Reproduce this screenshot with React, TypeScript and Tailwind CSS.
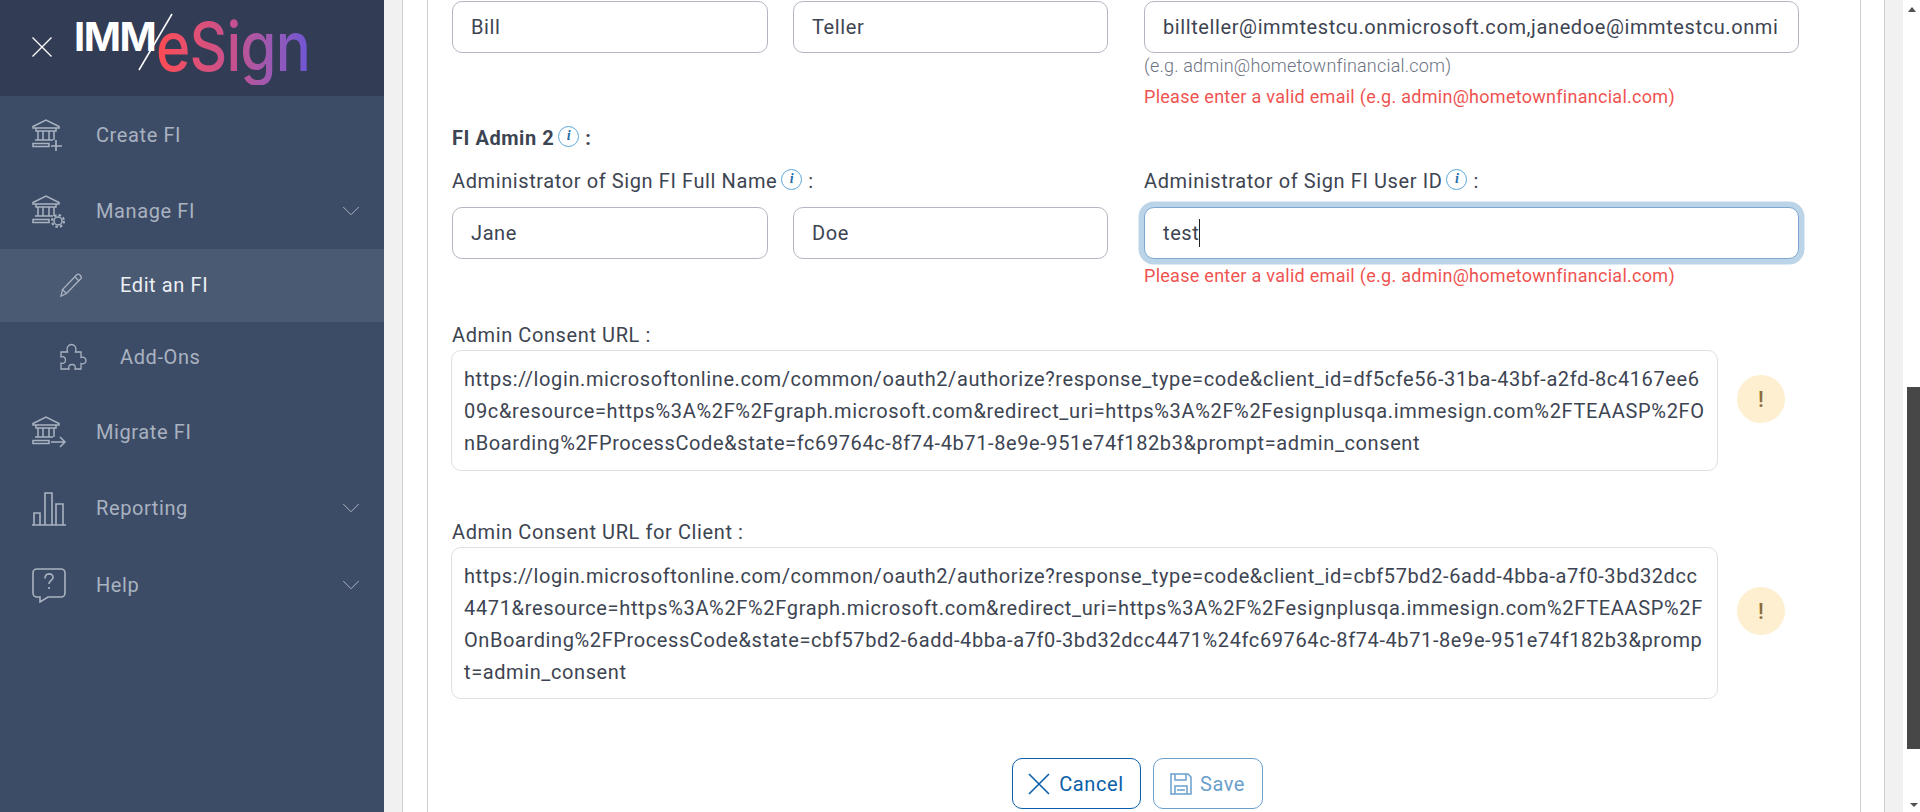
import React from "react";
import { ChevronDown } from "lucide-react";

const stroke = "#a9b2c0";

function Bank({ children }: { children?: React.ReactNode }) {
  return (
    <svg width="36" height="36" viewBox="0 0 36 36" fill="none" stroke={stroke} strokeWidth="1.5" className="shrink-0">
      <path d="M2 9.5 15 3l13 6.500v1.500H2z" />
      <path d="M5 11v3h20v-3M7 14v9M12 14v9M18 14v9M23 14v9" />
      <path d="M4 23h18M2 26.500h16v3H2z" />
      {children}
    </svg>
  );
}

const icons: Record<string, React.ReactNode> = {
  create: <Bank><path d="M25 23v11M20 29h11" strokeWidth="1.700" /></Bank>,
  manage: (
    <Bank>
      <circle cx="27" cy="28" r="4" />
      <circle cx="27" cy="28" r="6" strokeDasharray="2.500 2.200" strokeWidth="2" />
    </Bank>
  ),
  migrate: <Bank><path d="M20 28h14M29 23l5 5-5 5" /></Bank>,
  reporting: (
    <svg width="36" height="36" viewBox="0 0 36 36" fill="none" stroke={stroke} strokeWidth="1.600" className="shrink-0">
      <path d="M1 35h34M3 35V23h6v12M14 35V3h7v32M25 35V14h7v21" />
    </svg>
  ),
  help: (
    <svg width="36" height="36" viewBox="0 0 36 36" fill="none" stroke={stroke} strokeWidth="1.600" className="shrink-0">
      <path d="M6 2h24a4 4 0 0 1 4 4v20a4 4 0 0 1-4 4H17l-8 5v-5H6a4 4 0 0 1-4-4V6a4 4 0 0 1 4-4z" />
      <path d="M14 11.500c0-6 8-6 8-1 0 3-4 3-4 6.500M18 20v2" />
    </svg>
  ),
  pencil: (
    <svg width="26" height="26" viewBox="0 0 26 26" fill="none" stroke={stroke} strokeWidth="1.300" className="shrink-0">
      <path d="M2 24l1.500-6.500L18 2.500c1.500-1.500 5.500 2 4 4L7.500 21.500z" />
      <path d="M3.500 17.500l4 4M16 5l4 4" />
    </svg>
  ),
  puzzle: (
    <svg width="28" height="28" viewBox="0 0 28 28" fill="none" stroke={stroke} strokeWidth="1.300" className="shrink-0">
      <path d="M2 9h6.500C7 5 9 1.500 12.500 1.500S18 5 16.500 9H22v5.500c3-1 5 .5 5 3s-2 4-5 3V26h-6c1-3-.5-4.500-3-4.500s-4 1.500-3 4.500H2v-6c3 1 4.500-.5 4.500-3s-1.500-4-4.500-3z" />
    </svg>
  ),
};

function NavRow({ label, icon, chevron, y, sub, active }: { label: string; icon: string; chevron?: boolean; y: string; sub?: boolean; active?: boolean }) {
  return (
    <div className={`flex items-center ${y} ${sub ? "pl-[59px] pb-[2px]" : "pl-[31px]"} ${active ? "bg-[#4a5a72] text-[#eceff3]" : "text-[#a9b2c0]"}`}>
      <div className={`${sub ? "w-[61px]" : "w-[65px]"} flex shrink-0`}>{icons[icon]}</div>
      <span className="text-[20px] leading-6 tracking-[0.6px] flex-1">{label}</span>
      {chevron && <ChevronDown size={30} strokeWidth={0.8} color={stroke} className="mr-[18px]" />}
    </div>
  );
}

function Logo() {
  return (
    <div className="relative w-[240px] h-[80px]">
      <span className="absolute -left-[3px] top-[9px] text-[40px] leading-[40px] font-bold text-white tracking-[-1.500px]" style={{ fontFamily: "Inter, sans-serif" }}>IMM</span>
      <span
        className="absolute left-[79px] -top-[1px] origin-left scale-x-[0.86] text-[68px] leading-[78px] font-medium tracking-[-1px] bg-clip-text text-transparent bg-gradient-to-r from-[#ff4a50] via-[#c5508e] to-[#6d55d6]"
        style={{ fontFamily: "Inter, sans-serif" }}
      >
        eSign
      </span>
      <svg width="240" height="80" viewBox="0 0 240 80" className="absolute left-0 top-0" fill="none" stroke="#fff" strokeWidth="1.500">
        <path d="M95 6 62 62" />
      </svg>
    </div>
  );
}

function Info({ right = 6 }: { right?: number }) {
  return (
    <span
      className="inline-flex items-center justify-center rounded-full border border-[#5aa5d8] text-[#1f6fa8] italic font-bold bg-white ml-[4px] -translate-y-[2px] shrink-0 w-[21px] h-[21px] text-[14px] tracking-normal"
      style={{ marginRight: right, fontFamily: "'Liberation Serif', serif" }}
    >
      i
    </span>
  );
}

function Field({ value, focus, caret }: { value: string; focus?: boolean; caret?: boolean }) {
  return (
    <div
      className={`h-[52px] w-full rounded-[10px] border bg-white flex items-center pl-[18px] pr-[20px] text-[20px] tracking-[0.6px] text-[#3d4452] whitespace-nowrap ${
        focus ? "border-[#7ea8d1] shadow-[0_0_0_5.500px_#bcd4e8]" : "border-[#b3b7c1]"
      }`}
    >
      <span className="overflow-hidden">{value}</span>
      {caret && <span className="w-px h-[28px] bg-[#222] shrink-0" />}
    </div>
  );
}

function UrlBlock({ label, lines, h, mt, mb, alertTop }: { label: string; lines: string[]; h: string; mt: string; mb: string; alertTop: string }) {
  return (
    <div className={mt}>
      <div className={`text-[20px] leading-6 text-[#3d4452] tracking-[0.6px] ${mb}`}>{label}</div>
      <div className="flex items-start -ml-[1px]">
        <div className={`w-[1267px] ${h} border border-[#dfdfe4] rounded-[10px] px-[12px] pt-[12px] text-[20px] tracking-[0.6px] leading-[32px] text-[#3d4452] whitespace-nowrap`}>
          {lines.map((l, i) => (
            <div key={l} className={i === 1 ? "tracking-[0.66px]" : ""}>{l}</div>
          ))}
        </div>
        <div className={`ml-[19px] ${alertTop} w-[48px] h-[48px] rounded-full bg-[#fdefd0] flex items-center justify-center text-[#8a6d3b] text-[22px] font-medium`}>!</div>
      </div>
    </div>
  );
}

export default function App() {
  return (
    <div className="h-[812px] w-[1920px] overflow-hidden flex bg-[#f1f1f1]" style={{ fontFamily: "Roboto, sans-serif" }}>
      <aside className="w-[384px] shrink-0 bg-[#3d4c66] flex flex-col">
        <div className="h-[96px] bg-[#323c55] flex items-center pl-[32px] text-white">
          <svg width="20" height="20" viewBox="0 0 20 20" stroke="#fff" strokeWidth="1.300" className="shrink-0 -translate-y-[1px]">
            <path d="M0.500 0.500 19.500 19.500M19.500 0.500 0.500 19.500" />
          </svg>
          <div className="ml-[25px]"><Logo /></div>
        </div>
        <div className="flex flex-col pt-[1px]">
          <NavRow label="Create FI" icon="create" y="h-[76px]" />
          <NavRow label="Manage FI" icon="manage" chevron y="h-[76px]" />
          <NavRow label="Edit an FI" icon="pencil" sub active y="h-[73px]" />
          <NavRow label="Add-Ons" icon="puzzle" sub y="h-[72px]" />
          <NavRow label="Migrate FI" icon="migrate" y="h-[76px]" />
          <NavRow label="Reporting" icon="reporting" chevron y="h-[76px]" />
          <NavRow label="Help" icon="help" chevron y="h-[77px]" />
        </div>
      </aside>

      <main className="flex-1 flex min-w-0 pl-[18px]">
        <div className="w-[1483px] shrink-0 bg-white border-x border-[#cfcfcf] pl-[24px]">
          <div className="h-[812px] w-[1434px] border-x border-[#cfcfcf] pl-[24px] pt-[1px]">
            <div className="flex gap-[36px]">
              <div className="w-[656px] flex gap-[25px] shrink-0">
                <div className="w-[316px]"><Field value="Bill" /></div>
                <div className="w-[315px]"><Field value="Teller" /></div>
              </div>
              <div className="w-[655px] shrink-0">
                <Field value="billteller@immtestcu.onmicrosoft.com,janedoe@immtestcu.onmicrosoft.com" />
                <div className="text-[18px] leading-[22px] mt-[2px] tracking-[0.2px] text-[#6b7280] font-light">(e.g. admin@hometownfinancial.com)</div>
                <div className="text-[18px] leading-[22px] mt-[9px] tracking-[0.28px] text-[#ef5350]">Please enter a valid email (e.g. admin@hometownfinancial.com)</div>
              </div>
            </div>

            <div className="mt-[18px] text-[20px] leading-6 font-bold tracking-[0.55px] text-[#3d4452] flex items-center">FI Admin 2<Info />:</div>
            <div className="flex gap-[36px] mt-[19px]">
              <div className="w-[656px] shrink-0">
                <div className="text-[20px] leading-6 tracking-[0.6px] text-[#3d4452] mb-[14px] flex items-center">Administrator of Sign FI Full Name<Info />:</div>
                <div className="flex gap-[25px]">
                  <div className="w-[316px]"><Field value="Jane" /></div>
                  <div className="w-[315px]"><Field value="Doe" /></div>
                </div>
              </div>
              <div className="w-[655px] shrink-0">
                <div className="text-[20px] leading-6 tracking-[0.6px] text-[#3d4452] mb-[14px] flex items-center">Administrator of Sign FI User ID<Info />:</div>
                <Field value="test" focus caret />
                <div className="text-[18px] leading-[22px] mt-[6px] tracking-[0.28px] text-[#ef5350]">Please enter a valid email (e.g. admin@hometownfinancial.com)</div>
              </div>
            </div>

            <UrlBlock
              label="Admin Consent URL :"
              mt="mt-[36px]"
              mb="mb-[3px]"
              h="h-[121px]"
              alertTop="mt-[25px]"
              lines={[
                "https://login.microsoftonline.com/common/oauth2/authorize?response_type=code&client_id=df5cfe56-31ba-43bf-a2fd-8c4167ee6",
                "09c&resource=https%3A%2F%2Fgraph.microsoft.com&redirect_uri=https%3A%2F%2Fesignplusqa.immesign.com%2FTEAASP%2FO",
                "nBoarding%2FProcessCode&state=fc69764c-8f74-4b71-8e9e-951e74f182b3&prompt=admin_consent",
              ]}
            />
            <UrlBlock
              label="Admin Consent URL for Client :"
              mt="mt-[49px]"
              mb="mb-[3px]"
              h="h-[152px]"
              alertTop="mt-[40px]"
              lines={[
                "https://login.microsoftonline.com/common/oauth2/authorize?response_type=code&client_id=cbf57bd2-6add-4bba-a7f0-3bd32dcc",
                "4471&resource=https%3A%2F%2Fgraph.microsoft.com&redirect_uri=https%3A%2F%2Fesignplusqa.immesign.com%2FTEAASP%2F",
                "OnBoarding%2FProcessCode&state=cbf57bd2-6add-4bba-a7f0-3bd32dcc4471%24fc69764c-8f74-4b71-8e9e-951e74f182b3&promp",
                "t=admin_consent",
              ]}
            />

            <div className="flex justify-center gap-[12px] mt-[59px] w-[1370px]">
              <button className="h-[51px] w-[129px] rounded-[10px] border border-[#0b5ea8] text-[#0b5ea8] text-[20px] tracking-[0.6px] flex items-center justify-center gap-[9px]">
                <svg width="22" height="22" viewBox="0 0 22 22" stroke="#0b5ea8" strokeWidth="1.600">
                  <path d="M1 1 21 21M21 1 1 21" />
                </svg>
                Cancel
              </button>
              <button className="h-[51px] w-[110px] rounded-[10px] border border-[#6a9fcc] text-[#6a9fcc] text-[20px] tracking-[0.6px] flex items-center justify-center gap-[8px]">
                <svg width="22" height="22" viewBox="0 0 22 22" fill="none" stroke="#6a9fcc" strokeWidth="1.500">
                  <path d="M1 1h17l3 3v17H1z" /><path d="M5 1v6h11V1M5 21v-8h12v8M7 17h8" />
                </svg>
                Save
              </button>
            </div>
          </div>
        </div>
        <div className="w-[18px] shrink-0 bg-[#f1f1f1]" />
        <div className="w-[17px] shrink-0 bg-white relative">
          <div className="absolute left-[4px] right-0 top-[387px] h-[362px] bg-[#474747]" />
          <div className="absolute left-[5px] top-[7px] w-0 h-0 border-x-[4px] border-x-transparent border-b-[5px] border-b-[#505050]" />
          <div className="absolute left-[7px] bottom-[5px] w-0 h-0 border-x-[4px] border-x-transparent border-t-[4px] border-t-[#505050]" />
        </div>
      </main>
    </div>
  );
}
